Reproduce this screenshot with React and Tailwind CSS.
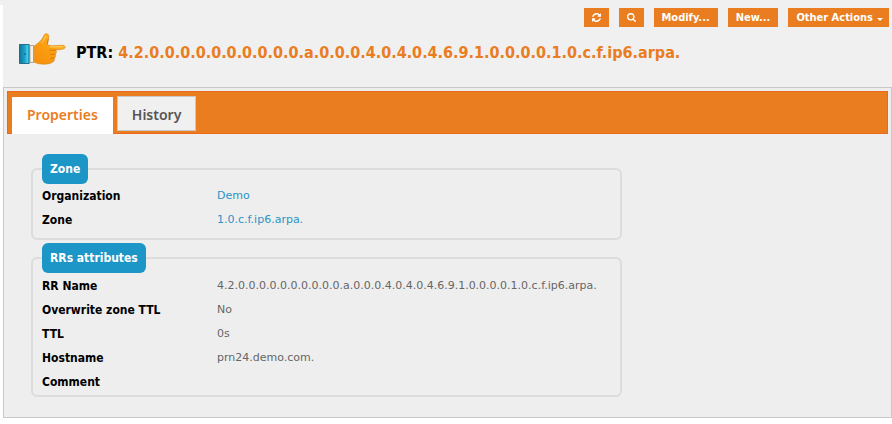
const TABS = ['Properties', 'History'];

const ZONE_ROWS = [
  { label: 'Organization', value: 'Demo', link: true },
  { label: 'Zone', value: '1.0.c.f.ip6.arpa.', link: true },
];

const RR_NAME = '4.2.0.0.0.0.0.0.0.0.0.0.a.0.0.0.4.0.4.0.4.6.9.1.0.0.0.0.1.0.c.f.ip6.arpa.';

const RR_ROWS = [
  { label: 'RR Name', value: RR_NAME },
  { label: 'Overwrite zone TTL', value: 'No' },
  { label: 'TTL', value: '0s' },
  { label: 'Hostname', value: 'prn24.demo.com.' },
  { label: 'Comment', value: '' },
];

function RefreshIcon() {
  return (
    <svg width="9" height="9" viewBox="0 0 1536 1536" fill="currentColor" aria-hidden="true">
      <path d="M1511 928q0 5-1 7-64 268-268 434.5t-478 166.5q-146 0-282.5-55t-243.5-157l-129 129q-19 19-45 19t-45-19-19-45v-448q0-26 19-45t45-19h448q26 0 45 19t19 45-19 45l-137 137q71 66 161 102t187 36q134 0 250-65t186-179q11-17 53-117 8-23 30-23h192q13 0 22.500 9.500t9.500 22.500zm25-800v448q0 26-19 45t-45 19h-448q-26 0-45-19t-19-45 19-45l138-138q-148-137-349-137-134 0-250 65t-186 179q-11 17-53 117-8 23-30 23h-199q-13 0-22.500-9.500t-9.500-22.500v-7q65-268 270-434.500t480-166.500q146 0 284 55.500t245 156.500l130-129q19-19 45-19t45 19 19 45z" />
    </svg>
  );
}

function SearchIcon() {
  return (
    <svg width="9" height="9" viewBox="64 128 1664 1664" fill="currentColor" aria-hidden="true">
      <path d="M1216 832q0-185-131.500-316.500t-316.500-131.500-316.500 131.500-131.500 316.500 131.500 316.500 316.500 131.500 316.500-131.500 131.500-316.500zm512 832q0 52-38 90t-90 38q-54 0-90-38l-343-342q-179 124-399 124-143 0-273.500-55.500t-225-150-150-225-55.500-273.500 55.500-273.500 150-225 225-150 273.500-55.500 273.500 55.500 225 150 150 225 55.500 273.500q0 220-124 399l343 343q37 37 37 90z" />
    </svg>
  );
}

function CaretIcon() {
  return (
    <svg width="6" height="3" viewBox="0 0 6 3" fill="currentColor" className="mt-1 -mr-[2px]" aria-hidden="true">
      <path d="M0 0h6L3 3z" />
    </svg>
  );
}

function HandIcon() {
  return (
    <svg width="47" height="32" viewBox="0 0 47 32" className="shrink-0" aria-hidden="true">
      <defs>
        <linearGradient id="cuff" x1="0" x2="1" y1="0" y2="0">
          <stop offset="0" stopColor="#12779b" />
          <stop offset="0.5" stopColor="#1b9cc4" />
          <stop offset="0.85" stopColor="#3fd0f4" />
          <stop offset="1" stopColor="#1f9cc0" />
        </linearGradient>
        <linearGradient id="skin" x1="0" x2="1" y1="1" y2="0">
          <stop offset="0" stopColor="#f68d0a" />
          <stop offset="0.5" stopColor="#fb9f12" />
          <stop offset="1" stopColor="#ffc23c" />
        </linearGradient>
      </defs>
      <path d="M.5 11.500H10.200V30.500H.5z" fill="url(#cuff)" stroke="#0f5873" strokeWidth="0.8" />
      <circle cx="6" cy="21" r="0.8" fill="#0b4a60" />
      <path d="M10.900 12.500H14.500V29.500H10.900z" fill="#f4f1ec" stroke="#94836f" strokeWidth="0.7" />
      <path
        d="M15.200 13C18 11 20.300 9.300 22.300 7C24.800 4.500 24.500 1 27 .700C29.500.500 30 2.600 29.600 5L28.300 11C29.500 12.500 31.500 12.800 33.500 12.800L43.800 12.300C46.700 12.300 46.800 15.900 43.900 16.100L36.300 17.200C38 18.200 37.600 20.700 35.900 21.100C37.300 22.500 36.700 24.800 35 25.200C36 26.800 35 28.800 33.200 29.200C31 31.600 21 32 15.200 29.200Z"
        fill="url(#skin)"
        stroke="#d98a1c"
        strokeWidth="0.7"
      />
      <path
        d="M31 17.200L36.300 17.200M31.500 21.300L35.900 21.100M31.500 25.300L35 25.200M29.200 6.500L28.300 11"
        fill="none"
        stroke="#c9700a"
        strokeWidth="0.8"
        strokeLinecap="round"
      />
      <path d="M26.500 3C26 6 24.500 8 22.500 10M31 14L43 13.600" fill="none" stroke="#ffd766" strokeWidth="0.9" strokeLinecap="round" />
    </svg>
  );
}

function ActionButton({ children, ...props }) {
  return (
    <button
      type="button"
      className="flex h-[19px] items-center gap-1 bg-[#e97d1f] px-2 text-[11px] leading-[16px] font-bold whitespace-nowrap text-white"
      {...props}
    >
      {children}
    </button>
  );
}

function FieldGroup({ title, rows, className }) {
  return (
    <fieldset className={`rounded-[6px] border-2 border-[#dcdcdc] px-[9px] ${className}`}>
      <legend className="rounded-[6px] bg-[#1c96c6] px-2 text-[12px] leading-[30px] font-bold text-white">
        {title}
      </legend>
      <table className="w-full text-left text-[12px]">
        <tbody>
          {rows.map((row) => (
            <tr key={row.label} className="h-6">
              <th scope="row" className="w-[175px] font-bold text-black">{row.label}</th>
              <td className="font-['DejaVu_Sans',sans-serif] text-[11px] text-[#666666] [font-stretch:normal]">
                {row.link ? <a href="#" className="text-[#2a94c6]">{row.value}</a> : row.value}
              </td>
            </tr>
          ))}
        </tbody>
      </table>
    </fieldset>
  );
}

export default function App() {
  return (
    <div className="min-h-screen bg-white font-['DejaVu_Sans_Condensed','DejaVu_Sans',sans-serif] [font-stretch:condensed]">
      <div className="h-[5px] bg-[#f0f0f0]" />
      <div className="pl-[3px]">
        <header className="h-[82px] bg-[#f0f0f0] pt-[3px]">
          <div className="flex justify-end gap-[10px] pr-[3px]">
            <ActionButton aria-label="Refresh"><RefreshIcon /></ActionButton>
            <ActionButton aria-label="Search"><SearchIcon /></ActionButton>
            <ActionButton>Modify...</ActionButton>
            <ActionButton>New...</ActionButton>
            <ActionButton>Other Actions <CaretIcon /></ActionButton>
          </div>
          <div className="flex items-end gap-[10px] pt-[6px] pl-4">
            <HandIcon />
            <h1 className="text-[16px] leading-[24px] font-bold whitespace-nowrap text-black">
              PTR: <span className="text-[#e97d1f]">{RR_NAME}</span>
            </h1>
          </div>
        </header>

        <main className="border border-[#c8c8c8] bg-[#eeeeee] p-[3px]">
          <nav className="flex h-[43px] items-end gap-1 border border-[#ea6a1c] bg-[#e97d1f] px-1">
            {TABS.map((tab, i) => (
              <button
                key={tab}
                type="button"
                className={
                  i === 0
                    ? "-mb-px h-[37px] bg-white px-[15px] pb-[2px] font-['Noto_Sans',sans-serif] text-[14px] font-semibold text-[#e97d1f]"
                    : "mb-[2px] h-[35px] border border-[#c8c8c8] bg-[#f0f0f0] px-[14px] pt-[2px] font-['Noto_Sans',sans-serif] text-[14px] font-semibold text-[#555555]"
                }
              >
                {tab}
              </button>
            ))}
          </nav>
          <div className="flex max-w-[615px] flex-col gap-[3px] pt-5 pb-[17px] pl-6">
            <FieldGroup title="Zone" rows={ZONE_ROWS} className="pb-[6px]" />
            <FieldGroup title="RRs attributes" rows={RR_ROWS} className="pt-px pb-px" />
          </div>
        </main>
      </div>
    </div>
  );
}
